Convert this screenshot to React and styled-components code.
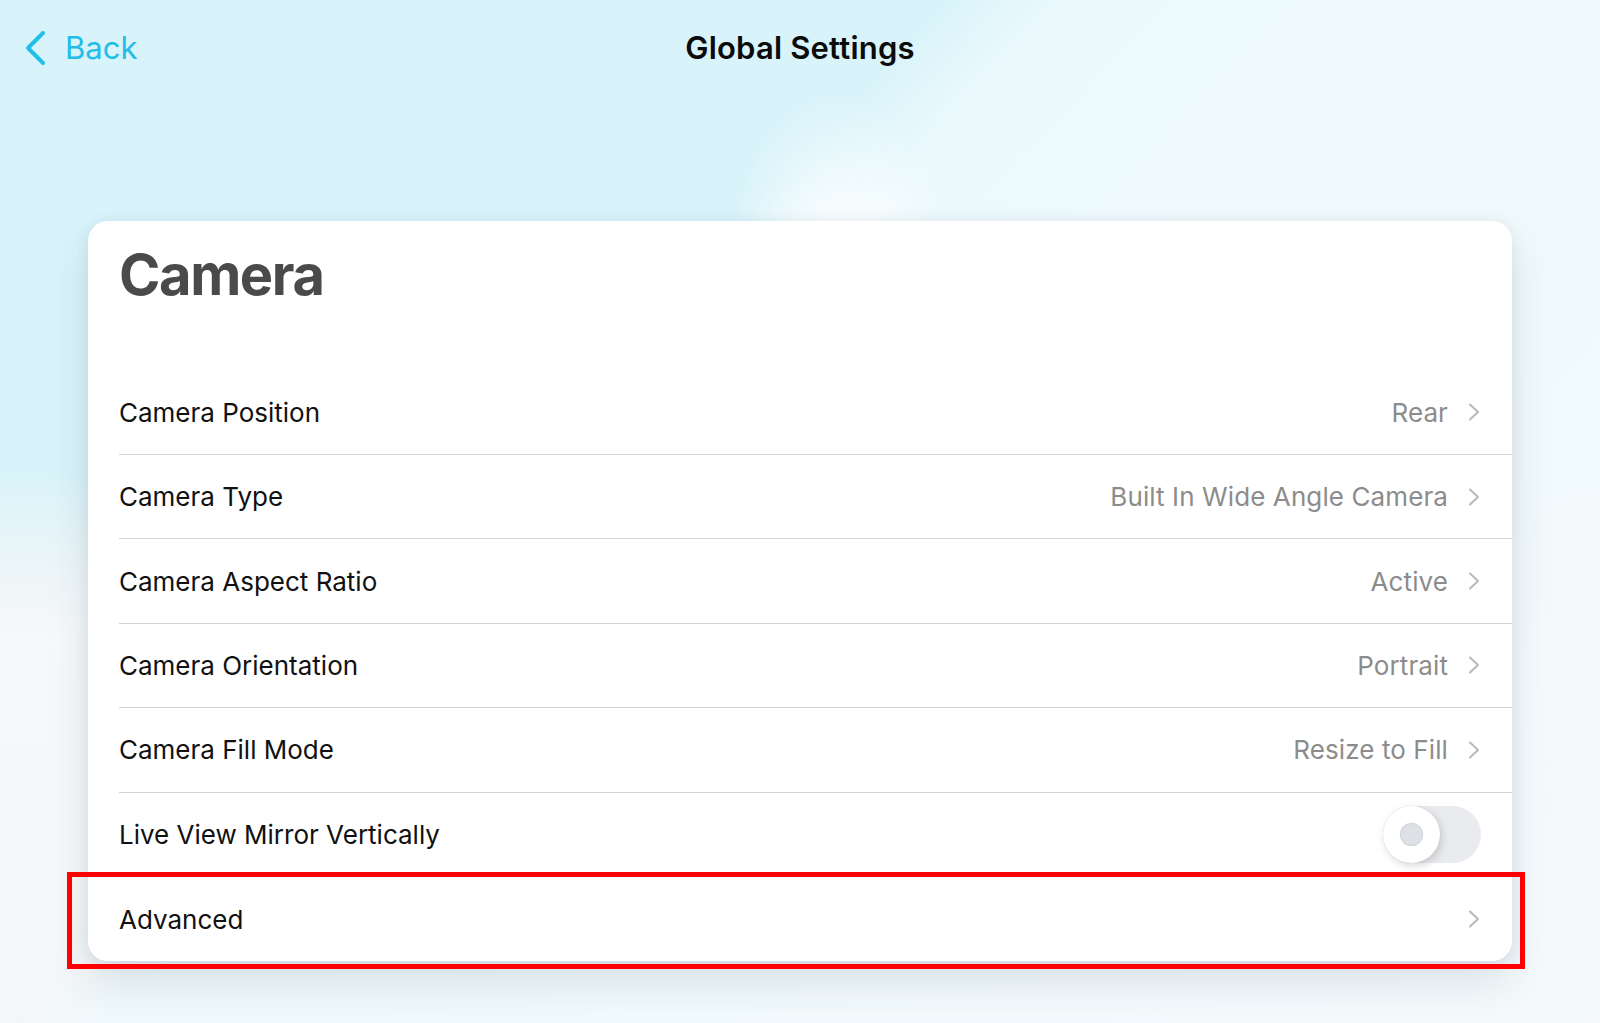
import React from "react";
import styled, { createGlobalStyle } from "styled-components";

const GlobalStyle = createGlobalStyle`
  html, body { margin: 0; padding: 0; }
  body {
    font-family: Inter, "Open Sans", "Liberation Sans", sans-serif;
    -webkit-font-smoothing: antialiased;
  }
`;

const Page = styled.div`
  position: relative;
  width: 1600px;
  height: 1023px;
  overflow: hidden;
  background:
    radial-gradient(ellipse 110px 190px at 835px 280px, rgba(255,255,255,1), rgba(255,255,255,0) 100%),
    linear-gradient(133deg, rgba(238,250,253,0) 37%, rgba(238,250,253,0.92) 42%, rgba(245,250,252,0.95) 100%),
    linear-gradient(180deg, #d9f3fa 0%, #d9f3fa 46%, #eaf5f8 54%, #f6f8f9 62%, #f5f6f7 100%);
`;

const Header = styled.header`
  display: grid;
  grid-template-columns: 1fr auto 1fr;
  align-items: center;
  height: 36px;
  padding: 30px 24px 0;
`;

const BackButton = styled.button`
  display: flex;
  align-items: center;
  gap: 19px;
  justify-self: start;
  border: 0;
  padding: 0;
  background: none;
  color: #22bde8;
  font-family: inherit;
  font-size: 31px;
  line-height: 36px;
  cursor: pointer;
`;

const Title = styled.h1`
  margin: 0;
  font-size: 31px;
  line-height: 36px;
  font-weight: 600;
  color: #0b0b0b;
  letter-spacing: 0.2px;
`;

const Card = styled.section`
  position: relative;
  margin: 155px 0 0 88px;
  width: 1424px;
  background: #fff;
  border-radius: 20px;
  padding-top: 20px;
  box-shadow: 0 22px 40px rgba(40, 60, 80, 0.12), 0 2px 14px rgba(40, 60, 80, 0.08);
`;

const Heading = styled.h2`
  margin: 0 0 0 31px;
  font-size: 56px;
  line-height: 69px;
  font-weight: 700;
  color: #4a4a4a;
  letter-spacing: -1.4px;
`;

const List = styled.ul`
  list-style: none;
  margin: 60.6px 0 0;
  padding: 0 0 0 31px;
`;

const Row = styled.li`
  position: relative;
  display: flex;
  align-items: center;
  height: 84.4px;
  box-sizing: border-box;
  padding-right: 32px;
  border-bottom: ${(p) => (p.$last ? "none" : "1px solid #d3d3d3")};
`;

const Label = styled.span`
  flex: 1;
  font-size: 26px;
  color: #111;
  letter-spacing: 0;
`;

const Value = styled.span`
  font-size: 26px;
  color: #8c8c8c;
  letter-spacing: 0.1px;
  margin-right: 20px;
`;

const Chevron = styled.svg`
  width: 12px;
  height: 20px;
  flex: none;
`;

const Toggle = styled.div`
  position: relative;
  width: 98px;
  height: 57px;
  margin-right: -1px;
  border-radius: 29px;
  background: #e9ebee;
`;

const Knob = styled.div`
  position: absolute;
  left: 0;
  top: 0;
  width: 57px;
  height: 57px;
  border-radius: 50%;
  background: #fff;
  box-shadow: 2px 3px 8px rgba(0, 0, 0, 0.16), 0 0 1px rgba(0, 0, 0, 0.12);
  display: flex;
  align-items: center;
  justify-content: center;
`;

const KnobDot = styled.div`
  width: 23px;
  height: 23px;
  border-radius: 50%;
  background: #dde1e5;
  box-shadow: inset 0 0 0 1px #d2d6da;
`;

const Highlight = styled.div`
  position: absolute;
  top: -5px;
  left: -52px;
  right: -13px;
  bottom: -8px;
  border: 5px solid #ff0000;
  pointer-events: none;
`;

const ChevronIcon = () => (
  <Chevron viewBox="0 0 12 20">
    <path d="M2 2.5 L10 10 L2 17.5" fill="none" stroke="#b9b9b9" strokeWidth="2" strokeLinecap="round" strokeLinejoin="round" />
  </Chevron>
);

const rows = [
  { label: "Camera Position", value: "Rear" },
  { label: "Camera Type", value: "Built In Wide Angle Camera" },
  { label: "Camera Aspect Ratio", value: "Active" },
  { label: "Camera Orientation", value: "Portrait" },
  { label: "Camera Fill Mode", value: "Resize to Fill" },
  { label: "Live View Mirror Vertically", toggle: true },
  { label: "Advanced", highlight: true },
];

export default function App() {
  return (
    <>
      <GlobalStyle />
      <Page>
        <Header>
          <BackButton>
            <svg width="22" height="36" viewBox="0 0 22 36">
              <path d="M19 3 L4 18 L19 33" fill="none" stroke="#22bde8" strokeWidth="4" strokeLinecap="round" strokeLinejoin="round" />
            </svg>
            Back
          </BackButton>
          <Title>Global Settings</Title>
          <span />
        </Header>
        <Card>
          <Heading>Camera</Heading>
          <List>
            {rows.map((r, i) => (
              <Row key={r.label} $last={i === rows.length - 1}>
                <Label>{r.label}</Label>
                {r.value && <Value>{r.value}</Value>}
                {r.toggle ? (
                  <Toggle>
                    <Knob>
                      <KnobDot />
                    </Knob>
                  </Toggle>
                ) : (
                  <ChevronIcon />
                )}
                {r.highlight && <Highlight />}
              </Row>
            ))}
          </List>
        </Card>
      </Page>
    </>
  );
}
